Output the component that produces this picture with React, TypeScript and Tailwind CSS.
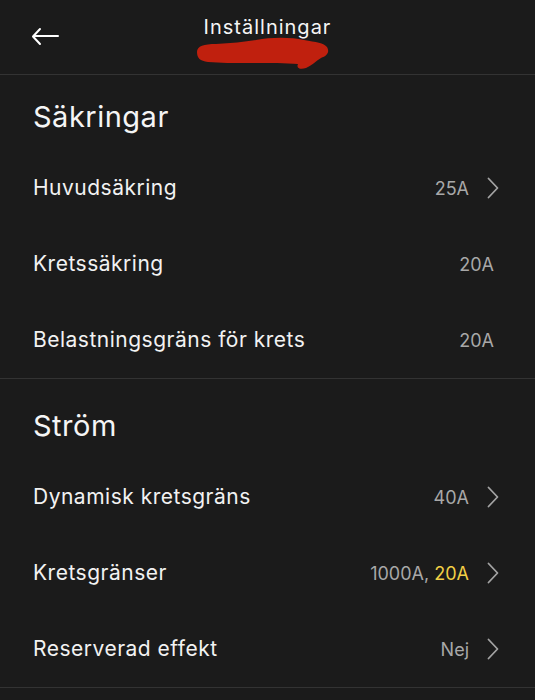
import React from "react";

const Chevron = () => (
  <svg width="12" height="22" viewBox="0 0 12 22" fill="none" className="shrink-0">
    <path d="M1.5 1.5 L10.5 11 L1.5 20.5" stroke="#a3a3a3" strokeWidth="1.8" strokeLinecap="round" strokeLinejoin="round" />
  </svg>
);

type Row = { label: string; value: React.ReactNode; chevron: boolean };

const RowItem = ({ row }: { row: Row }) => (
  <div className="flex h-[76px] items-center justify-between pl-[33px]">
    <span className="text-[21px] tracking-[0.5px] text-[#f2f2f2]">{row.label}</span>
    {row.chevron ? (
      <div className="flex items-center gap-[18px] pr-[36px]">
        <span className="text-[18px] text-[#a8a8a8]">{row.value}</span>
        <Chevron />
      </div>
    ) : (
      <div className="pr-[41px]">
        <span className="text-[18px] text-[#a8a8a8]">{row.value}</span>
      </div>
    )}
  </div>
);

const Section = ({ title, rows, second }: { title: string; rows: Row[]; second?: boolean }) => (
  <div className="border-b border-[#333333]">
    <div
      className={
        second
          ? "pl-[33px] pt-[31px] pb-[17px] text-[29px] tracking-[0.5px] leading-[32px] text-[#f5f5f5]"
          : "pl-[33px] pt-[26px] pb-[17px] text-[29px] tracking-[0.5px] leading-[32px] text-[#f5f5f5]"
      }
    >
      {title}
    </div>
    {rows.map((r) => (
      <RowItem key={r.label} row={r} />
    ))}
  </div>
);

export default function App() {
  return (
    <div
      className="w-[535px] h-[700px] overflow-hidden bg-[#1b1b1b]"
      style={{ fontFamily: "Inter, 'Noto Sans', sans-serif" }}
    >
      <div className="relative h-[75px] border-b border-[#333333]">
        <div className="absolute left-[31px] top-[27px]">
          <svg width="30" height="20" viewBox="0 0 30 20" fill="none">
            <path d="M9 2 L2 9.5 L9 17" stroke="#ffffff" strokeWidth="2" strokeLinecap="round" strokeLinejoin="round" />
            <path d="M3 9 L27 9" stroke="#ffffff" strokeWidth="2" strokeLinecap="round" />
          </svg>
        </div>
        <div className="flex flex-col items-center pt-[13px]">
          <span className="text-[20px] tracking-[1px] leading-[28px] text-[#f5f5f5]">Inställningar</span>
        </div>
        <div className="absolute left-[196px] top-[36px]">
          <svg width="134" height="36" viewBox="0 0 134 36" fill="none">
            <path
              d="M1 16 C1 10 8 8 20 8 C35 7 48 6 60 4 C75 1 95 1 108 4 C120 6 128 7 131 11 C134 16 131 20 125 22 C120 25 115 30 110 32 C104 34 100 32 102 28 C88 27 70 27 52 27 C38 27 24 27 12 26 C4 25 1 22 1 16 Z"
              fill="#c0200e"
            />
          </svg>
        </div>
      </div>
      <Section
        title="Säkringar"
        rows={[
          { label: "Huvudsäkring", value: "25A", chevron: true },
          { label: "Kretssäkring", value: "20A", chevron: false },
          { label: "Belastningsgräns för krets", value: "20A", chevron: false },
        ]}
      />
      <Section
        second
        title="Ström"
        rows={[
          { label: "Dynamisk kretsgräns", value: "40A", chevron: true },
          {
            label: "Kretsgränser",
            value: (
              <>
                1000A, <span className="text-[#f2cf45]">20A</span>
              </>
            ),
            chevron: true,
          },
          { label: "Reserverad effekt", value: "Nej", chevron: true },
        ]}
      />
    </div>
  );
}
